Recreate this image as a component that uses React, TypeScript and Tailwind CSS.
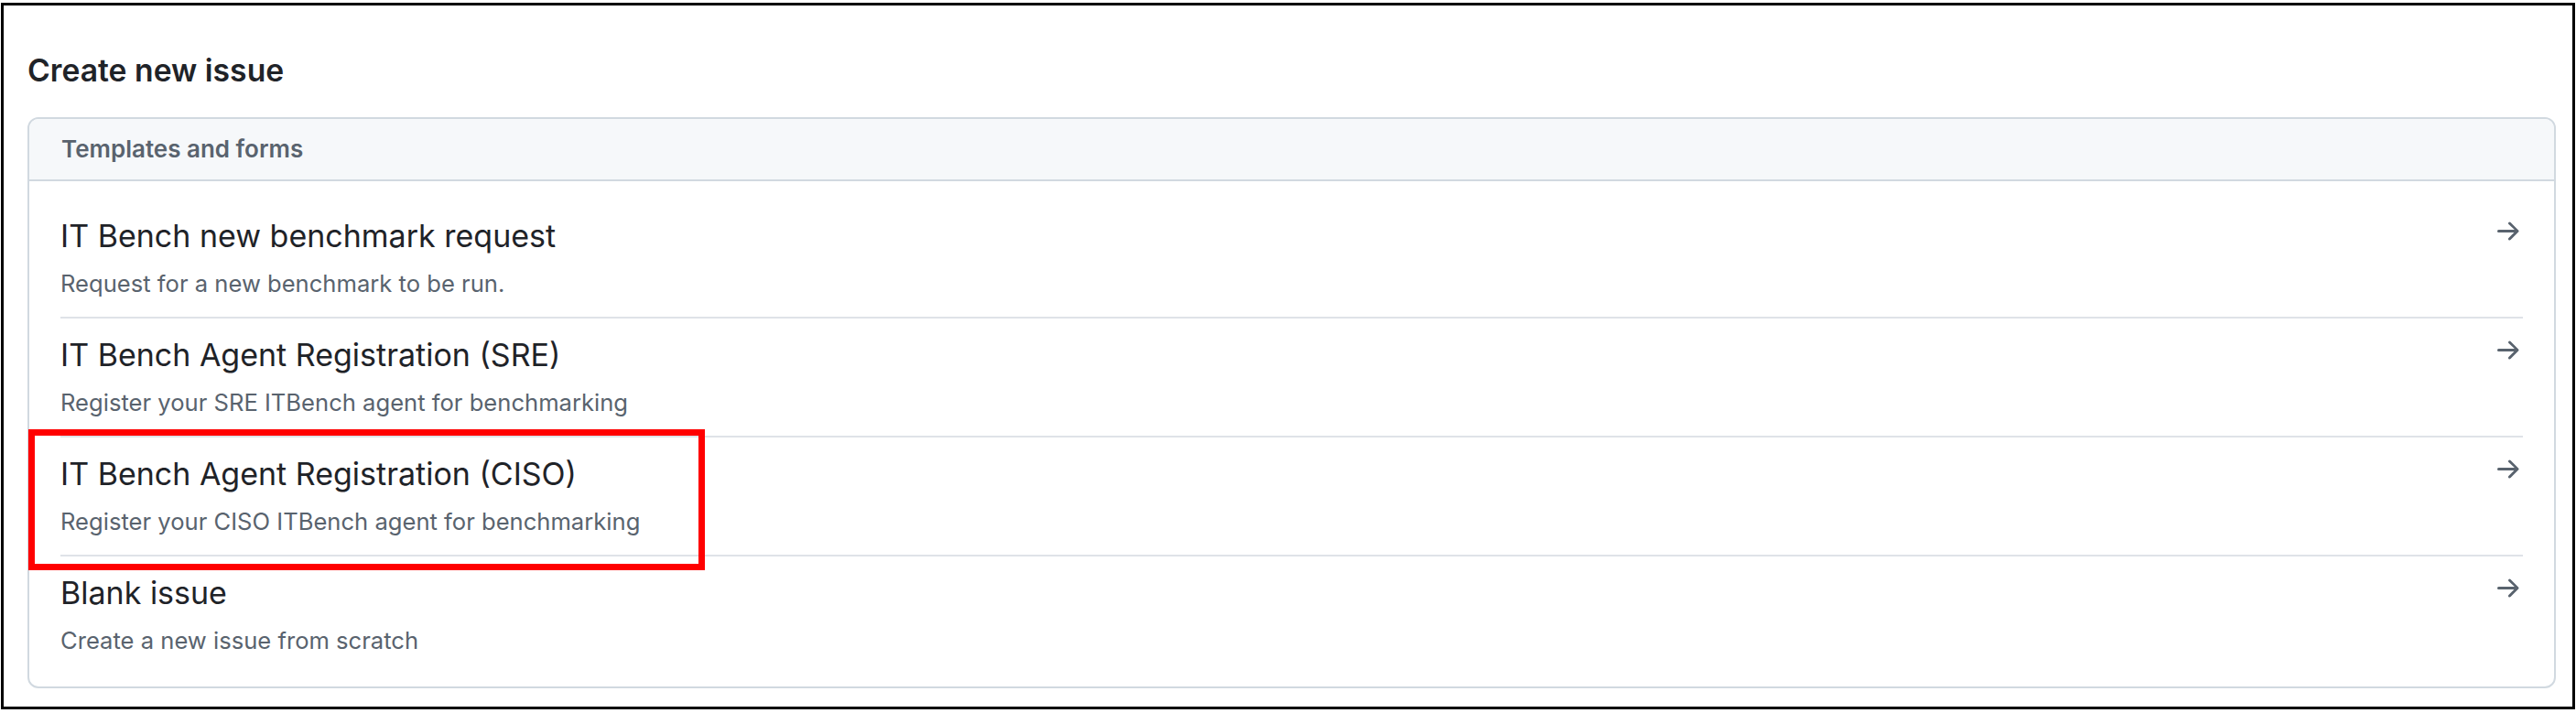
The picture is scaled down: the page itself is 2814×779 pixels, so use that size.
import React from "react";

interface Template {
	title: string;
	description: string;
}

const templates: Template[] = [
	{ title: "IT Bench new benchmark request", description: "Request for a new benchmark to be run." },
	{ title: "IT Bench Agent Registration (SRE)", description: "Register your SRE ITBench agent for benchmarking" },
	{ title: "IT Bench Agent Registration (CISO)", description: "Register your CISO ITBench agent for benchmarking" },
	{ title: "Blank issue", description: "Create a new issue from scratch" },
];

const ArrowRight = () => (
	<svg width="32" height="32" viewBox="0 0 16 16" fill="#59636e" className="shrink-0">
		<path d="M8.22 2.97a.75.75 0 0 1 1.06 0l4.25 4.25a.75.75 0 0 1 0 1.06l-4.25 4.25a.749.749 0 0 1-1.275-.326.749.749 0 0 1 .215-.734l2.97-2.97H2.75a.75.75 0 0 1 0-1.5h8.69L8.22 4.03a.75.75 0 0 1 0-1.06Z" />
	</svg>
);

const TemplateRow = ({ item, last }: { item: Template; last: boolean }) => {
	return (
		<div className={`flex items-start justify-between pt-[19px] pb-[20px] ${last ? "" : "border-b-2 border-[#dfe3e8]"}`}>
			<div className="flex flex-col gap-[15px]">
				<span className="text-[34px] leading-[42px] text-[#1f2328]">{item.title}</span>
				<span className="text-[25.6px] leading-[32px] text-[#59636e]">{item.description}</span>
			</div>
			<ArrowRight />
		</div>
	);
};

export default function App() {
	return (
		<div
			className="relative w-[2814px] h-[779px] bg-white pl-[1px] pt-[3px] pr-[1px] pb-[4px]"
			style={{ fontFamily: "Inter, 'Noto Sans', sans-serif" }}
		>
			<div className="h-full border-[3px] border-black pl-[26px] pr-[18px] pt-[51px]">
				<h2 className="text-[33.7px] leading-[40px] font-semibold text-[#1f2328]">Create new issue</h2>

				<div className="mt-[31px] border-2 border-[#d1d9e0] rounded-[12px] overflow-hidden">
					<div className="h-[68px] flex items-center px-[35px] bg-[#f6f8fa] border-b-2 border-[#d1d9e0]">
						<span className="text-[26px] leading-[32px] font-semibold text-[#59636e]">Templates and forms</span>
					</div>
					<div className="px-[34px] pt-[20px] pb-[14px]">
						{templates.map((t, i) => (
							<TemplateRow key={t.title} item={t} last={i === templates.length - 1} />
						))}
					</div>
				</div>
			</div>

			{/* highlight annotation */}
			<div className="absolute left-[31px] top-[469px] w-[739px] h-[154px] border-[7px] border-[#ff0000]" />
		</div>
	);
}
